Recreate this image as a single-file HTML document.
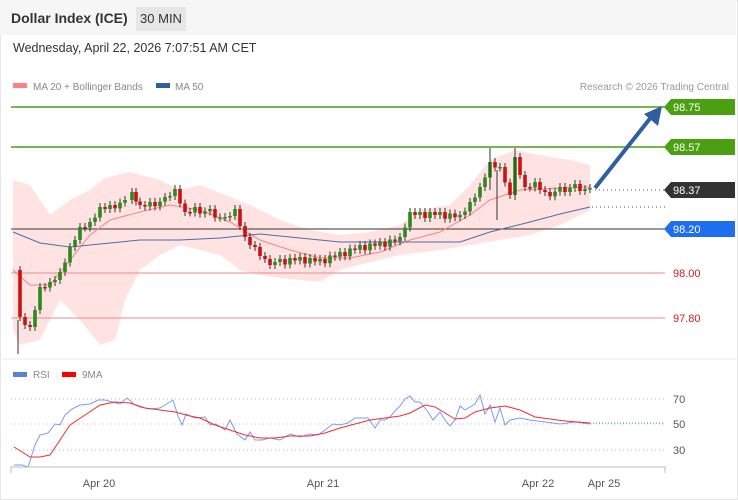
<!DOCTYPE html>
<html><head><meta charset="utf-8"><style>
body{margin:0;width:738px;height:500px;overflow:hidden;background:#fff;font-family:"Liberation Sans",sans-serif}
#wrap{position:absolute;left:0;top:0;width:736px;height:498px;border:1px solid #e6e6e6}
#hdr{position:absolute;left:0;top:0;width:736px;height:35px;background:#f6f6f6}
.t{position:absolute;white-space:nowrap}
</style></head><body>
<div id="wrap"></div>
<div id="hdr"></div>
<div class="t" style="left:11px;top:10px;font-size:14px;font-weight:bold;color:#333">Dollar Index (ICE)</div>
<div class="t" style="left:136px;top:7px;width:50px;height:24px;background:#e6e6e6;font-size:13px;line-height:24px;text-align:center;color:#333">30 MIN</div>
<div class="t" style="left:13px;top:41px;font-size:12.5px;color:#333">Wednesday, April 22, 2026 7:07:51 AM CET</div>
<svg id="s" width="738" height="500" style="position:absolute;left:0;top:0" font-family="Liberation Sans, sans-serif"></svg>
<script>
const s=document.getElementById('s');let h='';
h+='<rect x="13" y="83" width="14" height="5" fill="#ff8080"/><text x="33" y="90" font-size="10" fill="#888">MA 20 + Bollinger Bands</text>';
h+='<rect x="156" y="83" width="14" height="5" fill="#2f5fa0"/><text x="175" y="90" font-size="10" fill="#888">MA 50</text>';
h+='<text x="729" y="90" font-size="10" fill="#999" text-anchor="end">Research © 2026 Trading Central</text>';
const up=[[13,180],[30,185],[50,215],[70,200],[90,190],[105,178],[130,172],[160,180],[180,190],[200,185],[225,195],[250,205],[280,220],[310,230],[340,235],[370,232],[400,225],[420,210],[450,205],[470,185],[490,160],[515,150],[540,155],[570,160],[590,165]];
const lo=[[590,210],[560,225],[530,235],[500,240],[470,245],[440,250],[400,255],[370,262],[340,270],[320,282],[300,280],[280,278],[260,275],[240,270],[220,255],[200,250],[180,245],[160,255],[140,270],[125,300],[115,340],[100,345],[80,320],[60,300],[40,340],[20,345],[13,330]];
h+='<polygon fill="#ffdcdc" opacity=".8" points="'+up.concat(lo).map(p=>p.join(',')).join(' ')+'"/>';
h+='<line x1="11" y1="107" x2="665" y2="107" stroke="#4a9e10" stroke-width="1.5"/>';
h+='<line x1="11" y1="147" x2="665" y2="147" stroke="#4a9e10" stroke-width="1.5"/>';
h+='<line x1="11" y1="229" x2="665" y2="229" stroke="#333" stroke-width="1"/>';
h+='<line x1="11" y1="273" x2="665" y2="273" stroke="#e88" stroke-width="1"/>';
h+='<line x1="11" y1="318" x2="665" y2="318" stroke="#e88" stroke-width="1"/>';
h+='<line x1="595" y1="190" x2="665" y2="190" stroke="#555" stroke-dasharray="1,3"/>';
h+='<line x1="592" y1="207" x2="665" y2="207" stroke="#555" stroke-dasharray="1,3"/>';
h+='<polyline fill="none" stroke="#ff8080" stroke-width="1" points="13,270 30,285 50,285 70,260 90,235 110,220 140,212 170,205 200,210 230,222 260,240 290,250 320,258 350,258 380,252 410,240 440,232 470,215 490,200 520,190 560,188 590,187"/>';
h+='<polyline fill="none" stroke="#4a6ea8" stroke-width="1" points="13,232 40,243 70,247 100,244 140,240 180,240 220,238 260,234 300,238 340,242 380,242 420,242 460,242 490,232 530,222 560,214 590,207"/>';
const cl=[[13,270],[20,320],[30,330],[40,290],[50,285],[60,275],[70,250],[80,230],[90,225],[100,210],[110,208],[125,200],[132,195],[140,208],[150,205],[165,200],[175,192],[185,215],[195,210],[210,212],[225,220],[235,212],[245,240],[255,250],[265,262],[280,262],[300,260],[320,262],[340,255],[360,248],[380,245],[400,240],[410,215],[420,215],[440,215],[460,218],[470,205],[480,190],[490,165],[500,170],[510,195],[515,160],[525,190],[535,185],[545,195],[560,190],[575,187],[590,190]];
const pts=[];for(let i=0;i<cl.length-1;i++){const[a,b]=cl[i],[c,d]=cl[i+1];const n=Math.max(1,Math.round((c-a)/5));for(let k=0;k<n;k++){pts.push([a+(c-a)*k/n,b+(d-b)*k/n+(k%2?3:-3)*(k<n-1?1:0)])}}
pts.push([590,188]);
for(let i=1;i<pts.length;i++){const x=pts[i][0],o=pts[i-1][1],c=pts[i][1];const t=Math.min(o,c),bt=Math.max(o,c);const col=c<o?'#2a8a1a':'#d01010';h+=`<line x1="${x}" y1="${t-4}" x2="${x}" y2="${bt+4}" stroke="#333"/><rect x="${x-1.8}" y="${t}" width="3.6" height="${Math.max(1.5,bt-t)}" fill="${col}"/>`}
h+='<line x1="18" y1="320" x2="18" y2="354" stroke="#333"/><line x1="490" y1="148" x2="490" y2="190" stroke="#333"/><line x1="515" y1="148" x2="515" y2="200" stroke="#333"/><line x1="497" y1="170" x2="497" y2="220" stroke="#333"/>';
h+='<line x1="595" y1="188" x2="652" y2="116" stroke="#2f5fa0" stroke-width="4"/><polygon points="662,106 658,126 644,114" fill="#2f5fa0"/>';
function tag(y,c,t){h+=`<polygon points="664,${y} 671,${y-8} 735,${y-8} 735,${y+8} 671,${y+8}" fill="${c}"/><text x="673" y="${y+4}" font-size="11" fill="#fff">${t}</text>`}
tag(107,'#4aa010','98.75');tag(147,'#4aa010','98.57');tag(190,'#333','98.37');tag(229,'#1e6ef0','98.20');
h+='<text x="673" y="277" font-size="11" fill="#d02020">98.00</text><text x="673" y="322" font-size="11" fill="#d02020">97.80</text>';
h+='<line x1="0" y1="359" x2="738" y2="359" stroke="#eee"/>';
h+='<rect x="13" y="372" width="14" height="5" fill="#5b80e0"/><text x="33" y="378" font-size="10" fill="#888">RSI</text><rect x="62" y="372" width="14" height="5" fill="#f00"/><text x="82" y="378" font-size="10" fill="#888">9MA</text>';
[[399,'70'],[424,'50'],[450,'30']].forEach(([y,t])=>{h+=`<line x1="11" y1="${y}" x2="665" y2="${y}" stroke="#bbb" stroke-dasharray="1,3"/><text x="673" y="${y+4}" font-size="11" fill="#555">${t}</text>`});
h+='<polyline fill="none" stroke="#7a9cf0" stroke-width="1" points="14,465 22,465 28,467 35,445 40,435 48,433 55,424 60,425 65,415 72,409 80,405 90,404 98,400 105,400 112,402 120,404 127,398 135,405 140,407 150,409 160,408 165,405 173,400 178,416 182,425 186,414 195,418 205,417 210,425 216,424 225,430 230,420 237,434 245,440 250,432 255,440 262,440 270,438 280,440 290,434 300,437 310,434 318,435 325,430 333,424 340,425 348,423 355,418 362,418 368,418 375,428 380,420 385,420 390,417 395,411 400,406 405,399 410,396 415,402 420,402 428,412 433,420 440,412 445,420 450,426 455,420 460,406 465,410 470,407 475,404 480,395 485,414 490,405 495,422 500,408 505,425 510,420 520,418 530,420 545,422 560,424 575,422 590,424"/>';
h+='<polyline fill="none" stroke="#f03030" stroke-width="1" points="14,447 22,452 30,457 40,457 50,455 60,440 70,425 85,415 100,405 115,402 130,403 145,408 160,410 175,412 190,416 200,418 215,425 230,430 245,435 260,438 275,438 290,436 310,436 325,433 340,428 355,424 370,420 385,418 400,416 410,413 425,405 435,407 445,413 455,419 465,418 475,412 490,408 505,406 520,410 535,417 550,419 565,421 590,423"/>';
h+='<line x1="590" y1="423" x2="665" y2="423" stroke="#5b80e0" stroke-dasharray="1,2"/>';
h+='<polyline fill="none" stroke="#bbb" points="11,473 11,467 665,467 665,473"/>';
[[99,'Apr 20'],[323,'Apr 21'],[538,'Apr 22'],[604,'Apr 25']].forEach(([x,t])=>{h+=`<text x="${x}" y="487" font-size="11" fill="#555" text-anchor="middle">${t}</text>`});
s.innerHTML=h;
</script>
</body></html>
